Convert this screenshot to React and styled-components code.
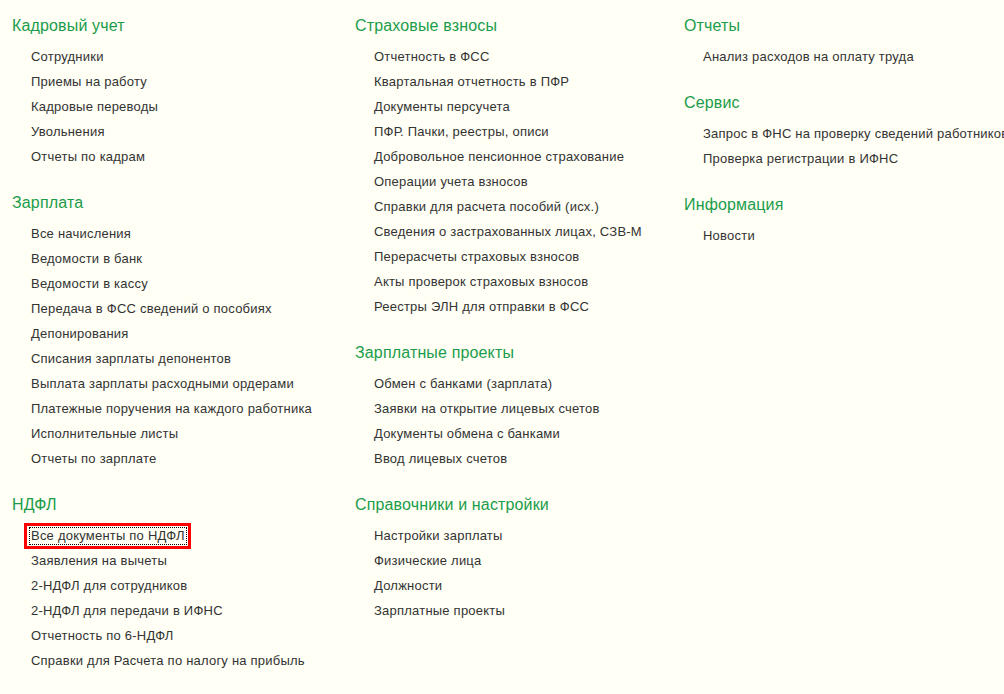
import React from 'react'
import styled, { createGlobalStyle } from 'styled-components'

const GlobalStyle = createGlobalStyle`
  html, body {
    margin: 0;
    padding: 0;
    background: #fffff5;
    overflow: hidden;
  }
  body {
    font-family: Arial, "Liberation Sans", sans-serif;
  }`

const Page = styled.div`
  display: flex;
  align-items: flex-start;
  padding: 13px 0 0 12px;
  width: 1004px;
  height: 694px;
  box-sizing: border-box;
  white-space: nowrap;`

const Column = styled.div`
  display: flex;
  flex-direction: column;
  gap: 21px;
  width: ${p => p.width}px;
  flex: none;`

const Section = styled.section`
  display: flex;
  flex-direction: column;`

const Title = styled.div`
  font-size: 16px;
  letter-spacing: 0.15px;
  line-height: 25px;
  height: 25px;
  color: #1b9c4a;
  margin-bottom: 6px;`

const Item = styled.a`
  display: block;
  font-size: 13px;
  letter-spacing: 0.22px;
  line-height: 25px;
  height: 25px;
  color: #333333;
  text-decoration: none;
  padding-left: 19px;
  cursor: pointer;`

const Focused = styled.span`
  position: relative;
  display: inline-block;
  line-height: 16px;
  &::before {
    content: '';
    position: absolute;
    left: -2px;
    right: -2px;
    top: -1px;
    bottom: -1px;
    border: 1px dotted #000;
  }
  &::after {
    content: '';
    position: absolute;
    left: -7px;
    right: -6px;
    top: -5px;
    bottom: -5px;
    border: 3px solid #ff0000;
  }`

const data = [
  {
    width: 343,
    sections: [
      {
        title: 'Кадровый учет',
        items: ['Сотрудники', 'Приемы на работу', 'Кадровые переводы', 'Увольнения', 'Отчеты по кадрам'],
      },
      {
        title: 'Зарплата',
        items: [
          'Все начисления',
          'Ведомости в банк',
          'Ведомости в кассу',
          'Передача в ФСС сведений о пособиях',
          'Депонирования',
          'Списания зарплаты депонентов',
          'Выплата зарплаты расходными ордерами',
          'Платежные поручения на каждого работника',
          'Исполнительные листы',
          'Отчеты по зарплате',
        ],
      },
      {
        title: 'НДФЛ',
        items: [
          'Все документы по НДФЛ',
          'Заявления на вычеты',
          '2-НДФЛ для сотрудников',
          '2-НДФЛ для передачи в ИФНС',
          'Отчетность по 6-НДФЛ',
          'Справки для Расчета по налогу на прибыль',
        ],
        focus: 0,
      },
    ],
  },
  {
    width: 329,
    sections: [
      {
        title: 'Страховые взносы',
        items: [
          'Отчетность в ФСС',
          'Квартальная отчетность в ПФР',
          'Документы персучета',
          'ПФР. Пачки, реестры, описи',
          'Добровольное пенсионное страхование',
          'Операции учета взносов',
          'Справки для расчета пособий (исх.)',
          'Сведения о застрахованных лицах, СЗВ-М',
          'Перерасчеты страховых взносов',
          'Акты проверок страховых взносов',
          'Реестры ЭЛН для отправки в ФСС',
        ],
      },
      {
        title: 'Зарплатные проекты',
        items: [
          'Обмен с банками (зарплата)',
          'Заявки на открытие лицевых счетов',
          'Документы обмена с банками',
          'Ввод лицевых счетов',
        ],
      },
      {
        title: 'Справочники и настройки',
        items: ['Настройки зарплаты', 'Физические лица', 'Должности', 'Зарплатные проекты'],
      },
    ],
  },
  {
    width: 360,
    sections: [
      { title: 'Отчеты', items: ['Анализ расходов на оплату труда'] },
      {
        title: 'Сервис',
        items: ['Запрос в ФНС на проверку сведений работников', 'Проверка регистрации в ИФНС'],
      },
      { title: 'Информация', items: ['Новости'] },
    ],
  },
]

export default function App() {
  return (
    <>
      <GlobalStyle />
      <Page>
        {data.map((col, ci) => (
          <Column key={ci} width={col.width}>
            {col.sections.map(sec => (
              <Section key={sec.title}>
                <Title>{sec.title}</Title>
                {sec.items.map((it, i) => (
                  <Item key={it}>
                    {sec.focus === i ? <Focused>{it}</Focused> : it}
                  </Item>
                ))}
              </Section>
            ))}
          </Column>
        ))}
      </Page>
    </>
  )
}
